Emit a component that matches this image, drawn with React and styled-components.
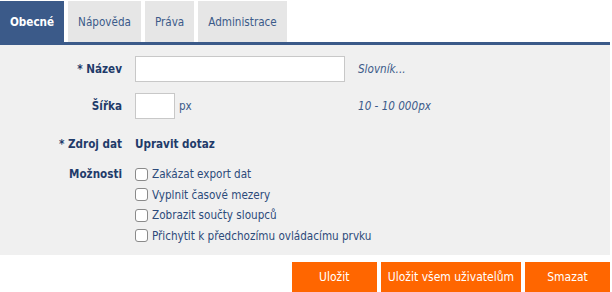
import React from "react";
import styled, { createGlobalStyle } from "styled-components";

const Global = createGlobalStyle`
  html, body { margin: 0; padding: 0; background: #fff; }
  body {
    font-family: "DejaVu Sans Condensed", "Liberation Sans", sans-serif;
    font-size: 11.6px;
    color: #1f3b6a;
  }
`;

const Page = styled.div`
  width: 610px;
`;

const Tabs = styled.div`
  display: flex;
  gap: 4px;
  padding-top: 1px;
  height: 41px;
  border-bottom: 3px solid #3b5a89;
`;

const Tab = styled.div`
  display: flex;
  align-items: center;
  padding: 0 10px;
  background: ${(p) => (p.$active ? "#3b5a89" : "#e6e6e6")};
  color: ${(p) => (p.$active ? "#fff" : "#3b5a89")};
  font-weight: ${(p) => (p.$active ? "bold" : "normal")};
`;

const Panel = styled.div`
  background: #f0f0f0;
  padding: 11px 0 9px;
  display: grid;
  grid-template-columns: 122px 210px auto;
  column-gap: 13px;
  align-items: center;
`;

const Label = styled.div`
  text-align: right;
  font-weight: bold;
  color: #1f3b6a;
  align-self: ${(p) => (p.$top ? "start" : "center")};
  line-height: 20px;
  margin-top: ${(p) => p.$mt || 0}px;
`;

const Cell = styled.div`
  display: flex;
  align-items: center;
  gap: 4px;
  margin-top: ${(p) => p.$mt || 0}px;
`;

const TextInput = styled.input`
  box-sizing: border-box;
  width: ${(p) => p.$w}px;
  height: 26px;
  border: 1px solid #c8c8c8;
  background: #fff;
  margin: 0;
  padding: 0 4px;
  font: inherit;
`;

const Unit = styled.span`
  color: #3b5a89;
`;

const Hint = styled.div`
  font-style: italic;
  color: #3b5a89;
  margin-top: ${(p) => p.$mt || 0}px;
`;

const Link = styled.span`
  font-weight: bold;
  color: #1f3b6a;
  line-height: 20px;
`;

const Options = styled.div`
  grid-column: 2 / 4;
  display: flex;
  flex-direction: column;
  margin-top: ${(p) => p.$mt || 0}px;
`;

const Option = styled.label`
  display: flex;
  align-items: center;
  gap: 4px;
  height: 20.5px;
  color: #2c4a7a;
  white-space: nowrap;
`;

const Check = styled.input.attrs({ type: "checkbox" })`
  appearance: none;
  margin: 0;
  width: 13px;
  height: 13px;
  border: 1px solid #8a8a8a;
  border-radius: 3px;
  background: #fff;
  box-sizing: border-box;
`;

const Footer = styled.div`
  display: flex;
  justify-content: flex-end;
  gap: 4px;
  padding-top: 7px;
`;

const Button = styled.button`
  height: 30px;
  min-width: 85px;
  padding: 0 7px;
  border: none;
  background: #ff6600;
  color: #fff;
  font-family: inherit;
  font-size: 12px;
`;

export default function App() {
  return (
    <Page>
      <Global />
      <Tabs>
        <Tab $active>Obecné</Tab>
        <Tab>Nápověda</Tab>
        <Tab>Práva</Tab>
        <Tab>Administrace</Tab>
      </Tabs>
      <Panel>
        <Label>* Název</Label>
        <Cell>
          <TextInput $w={210} />
        </Cell>
        <Hint>Slovník...</Hint>

        <Label $mt={11}>Šířka</Label>
        <Cell $mt={11}>
          <TextInput $w={40} />
          <Unit>px</Unit>
        </Cell>
        <Hint $mt={11}>10 - 10 000px</Hint>

        <Label $mt={15}>* Zdroj dat</Label>
        <Cell $mt={15}>
          <Link>Upravit dotaz</Link>
        </Cell>
        <div />

        <Label $top $mt={10}>Možnosti</Label>
        <Options $mt={10}>
          <Option><Check />Zakázat export dat</Option>
          <Option><Check />Vyplnit časové mezery</Option>
          <Option><Check />Zobrazit součty sloupců</Option>
          <Option><Check />Přichytit k předchozímu ovládacímu prvku</Option>
        </Options>
      </Panel>
      <Footer>
        <Button>Uložit</Button>
        <Button>Uložit všem uživatelům</Button>
        <Button>Smazat</Button>
      </Footer>
    </Page>
  );
}
